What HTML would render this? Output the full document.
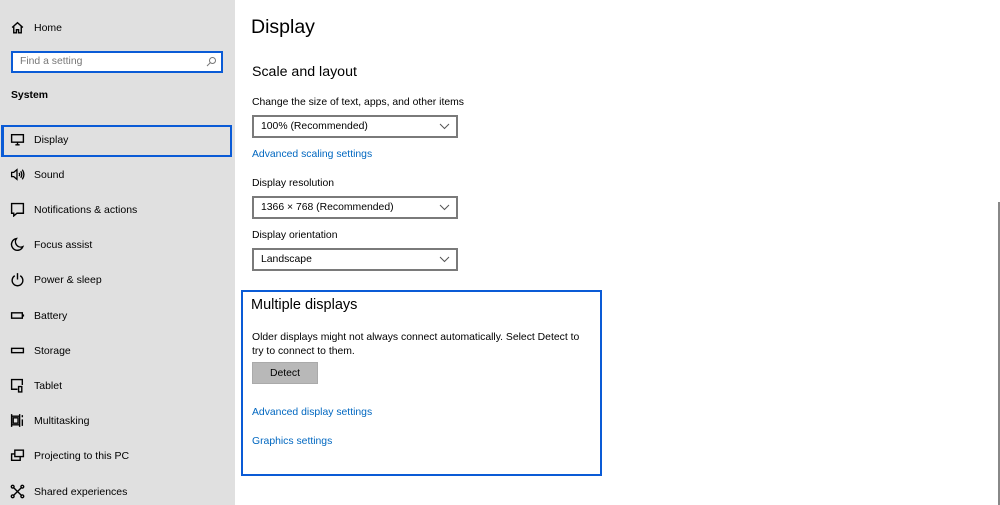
<!DOCTYPE html>
<html><head><style>
*{margin:0;padding:0;box-sizing:border-box}
body{width:1000px;height:505px;overflow:hidden;background:#fff;font-family:"Liberation Sans",sans-serif;color:#000;position:relative;font-size:10.4px}
.a{position:absolute;white-space:nowrap}
#side{position:absolute;left:0;top:0;width:235px;height:505px;background:#e0e0e0}
.it{position:absolute;left:34px;font-size:10.5px;line-height:14px}
.ic{position:absolute;left:10px;width:15px;height:15px}
.dd{position:absolute;left:252px;width:206px;height:23px;border:2px solid #7a7a7a;background:#fff;font-size:10.4px;line-height:20px;padding-left:7px}
.dd svg{position:absolute;right:6px;top:6px}
.lk{color:#0067c0;font-size:10.4px}
</style></head><body>
<div id="side">
<svg class="ic" style="top:20px" viewBox="0 0 14 14" fill="none" stroke="#000" stroke-width="1.3"><path d="M2 7L7 2.5 12 7M3.5 6v6h2.5V9h2v3h2.5V6"/></svg>
<div class="it" style="top:21px">Home</div>
<div class="a" style="left:11px;top:51px;width:212px;height:22px;border:2px solid #0a5bd6;background:#fff"></div>
<div class="a" style="left:20px;top:56px;color:#777;font-size:10.4px">Find a setting</div>
<svg class="a" style="left:206px;top:56px" width="11" height="11" viewBox="0 0 11 11" fill="none" stroke="#777"><circle cx="6.5" cy="4.5" r="3"/><path d="M4.3 6.7L1 10"/></svg>
<div class="a" style="left:11px;top:90px;font-weight:bold;font-size:10.4px">System</div>
<div class="a" style="left:1px;top:125px;width:231px;height:32px;border:2px solid #0a5bd6"></div>
<div class="a" style="left:1px;top:127px;width:3px;height:28px;background:#0a5bd6"></div>
<svg class="ic" style="top:132px" viewBox="0 0 14 14" fill="none" stroke="#000" stroke-width="1.3"><rect x="1.5" y="2.5" width="11" height="7"/><path d="M5 12h4M7 9.5v2.5"/></svg>
<div class="it" style="top:133px">Display</div>
<svg class="ic" style="top:167px" viewBox="0 0 14 14" fill="none" stroke="#000" stroke-width="1.2"><path d="M1.5 5h2l3-2.5v9l-3-2.5h-2z M8.5 5.5q1 1.5 0 3M10 4q2 3 0 6M11.5 2.5q3 4.5 0 9"/></svg>
<div class="it" style="top:168px">Sound</div>
<svg class="ic" style="top:202px" viewBox="0 0 14 14" fill="none" stroke="#000" stroke-width="1.3"><path d="M1.5 1.5h11v9h-6l-3 2.5v-2.5h-2z"/></svg>
<div class="it" style="top:203px">Notifications &amp; actions</div>
<svg class="ic" style="top:237px" viewBox="0 0 14 14" fill="none" stroke="#000" stroke-width="1.3"><path d="M6 1.5a5.5 5.5 0 1 0 6 7.5A5 5 0 0 1 6 1.5z"/></svg>
<div class="it" style="top:238px">Focus assist</div>
<svg class="ic" style="top:272px" viewBox="0 0 14 14" fill="none" stroke="#000" stroke-width="1.3"><path d="M4.5 3.5a5 5 0 1 0 5 0M7 1v6"/></svg>
<div class="it" style="top:273px">Power &amp; sleep</div>
<svg class="ic" style="top:308px" viewBox="0 0 14 14" fill="none" stroke="#000" stroke-width="1.3"><rect x="1.5" y="4.5" width="10" height="5"/><path d="M12.5 6v2"/></svg>
<div class="it" style="top:309px">Battery</div>
<svg class="ic" style="top:343px" viewBox="0 0 14 14" fill="none" stroke="#000" stroke-width="1.3"><rect x="1.5" y="5" width="11" height="4"/></svg>
<div class="it" style="top:344px">Storage</div>
<svg class="ic" style="top:378px" viewBox="0 0 14 14" fill="none" stroke="#000" stroke-width="1.3"><path d="M7 10.5H1.5v-9h10v5"/><path d="M8 13v-5h3v5z"/></svg>
<div class="it" style="top:379px">Tablet</div>
<svg class="ic" style="top:413px" viewBox="0 0 14 14" fill="none" stroke="#000" stroke-width="1.3"><path d="M1.5 1v12M9 1v12M1.5 3h7.5M1.5 11h7.5M3 4.5h4.5v5H3zM11.5 2v2M11.5 6v6"/></svg>
<div class="it" style="top:414px">Multitasking</div>
<svg class="ic" style="top:448px" viewBox="0 0 14 14" fill="none" stroke="#000" stroke-width="1.3"><rect x="4.5" y="2" width="8" height="6"/><path d="M4.5 5.5h-3v6h8v-3.5"/></svg>
<div class="it" style="top:449px">Projecting to this PC</div>
<svg class="ic" style="top:484px" viewBox="0 0 14 14" fill="none" stroke="#000" stroke-width="1.3"><path d="M3 3l8 8M11 3l-8 8"/><circle cx="2.5" cy="2.5" r="1.3"/><circle cx="11.5" cy="2.5" r="1.3"/><circle cx="2.5" cy="11.5" r="1.3"/><circle cx="11.5" cy="11.5" r="1.3"/></svg>
<div class="it" style="top:485px">Shared experiences</div>
</div>

<div class="a" style="left:251px;top:16px;font-size:19.5px">Display</div>
<div class="a" style="left:252px;top:64px;font-size:14.2px">Scale and layout</div>
<div class="a" style="left:252px;top:97px">Change the size of text, apps, and other items</div>
<div class="dd" style="top:115px">100% (Recommended)<svg width="11" height="7" viewBox="0 0 11 7" fill="none" stroke="#555"><path d="M1 1l4.5 4.5L10 1"/></svg></div>
<div class="a lk" style="left:252px;top:149px">Advanced scaling settings</div>
<div class="a" style="left:252px;top:178px">Display resolution</div>
<div class="dd" style="top:196px">1366 × 768 (Recommended)<svg width="11" height="7" viewBox="0 0 11 7" fill="none" stroke="#555"><path d="M1 1l4.5 4.5L10 1"/></svg></div>
<div class="a" style="left:252px;top:230px">Display orientation</div>
<div class="dd" style="top:248px">Landscape<svg width="11" height="7" viewBox="0 0 11 7" fill="none" stroke="#555"><path d="M1 1l4.5 4.5L10 1"/></svg></div>

<div class="a" style="left:241px;top:290px;width:361px;height:186px;border:2px solid #0a5bd6"></div>
<div class="a" style="left:251px;top:297px;font-size:14.5px">Multiple displays</div>
<div class="a" style="left:252px;top:331px;line-height:14px">Older displays might not always connect automatically. Select Detect to<br>try to connect to them.</div>
<div class="a" style="left:252px;top:362px;width:66px;height:22px;background:#b8b8b8;border:1px solid #aaa;text-align:center;line-height:21px">Detect</div>
<div class="a lk" style="left:252px;top:407px">Advanced display settings</div>
<div class="a lk" style="left:252px;top:436px">Graphics settings</div>
<div class="a" style="left:998px;top:202px;width:2px;height:303px;background:#888"></div>
</body></html>
